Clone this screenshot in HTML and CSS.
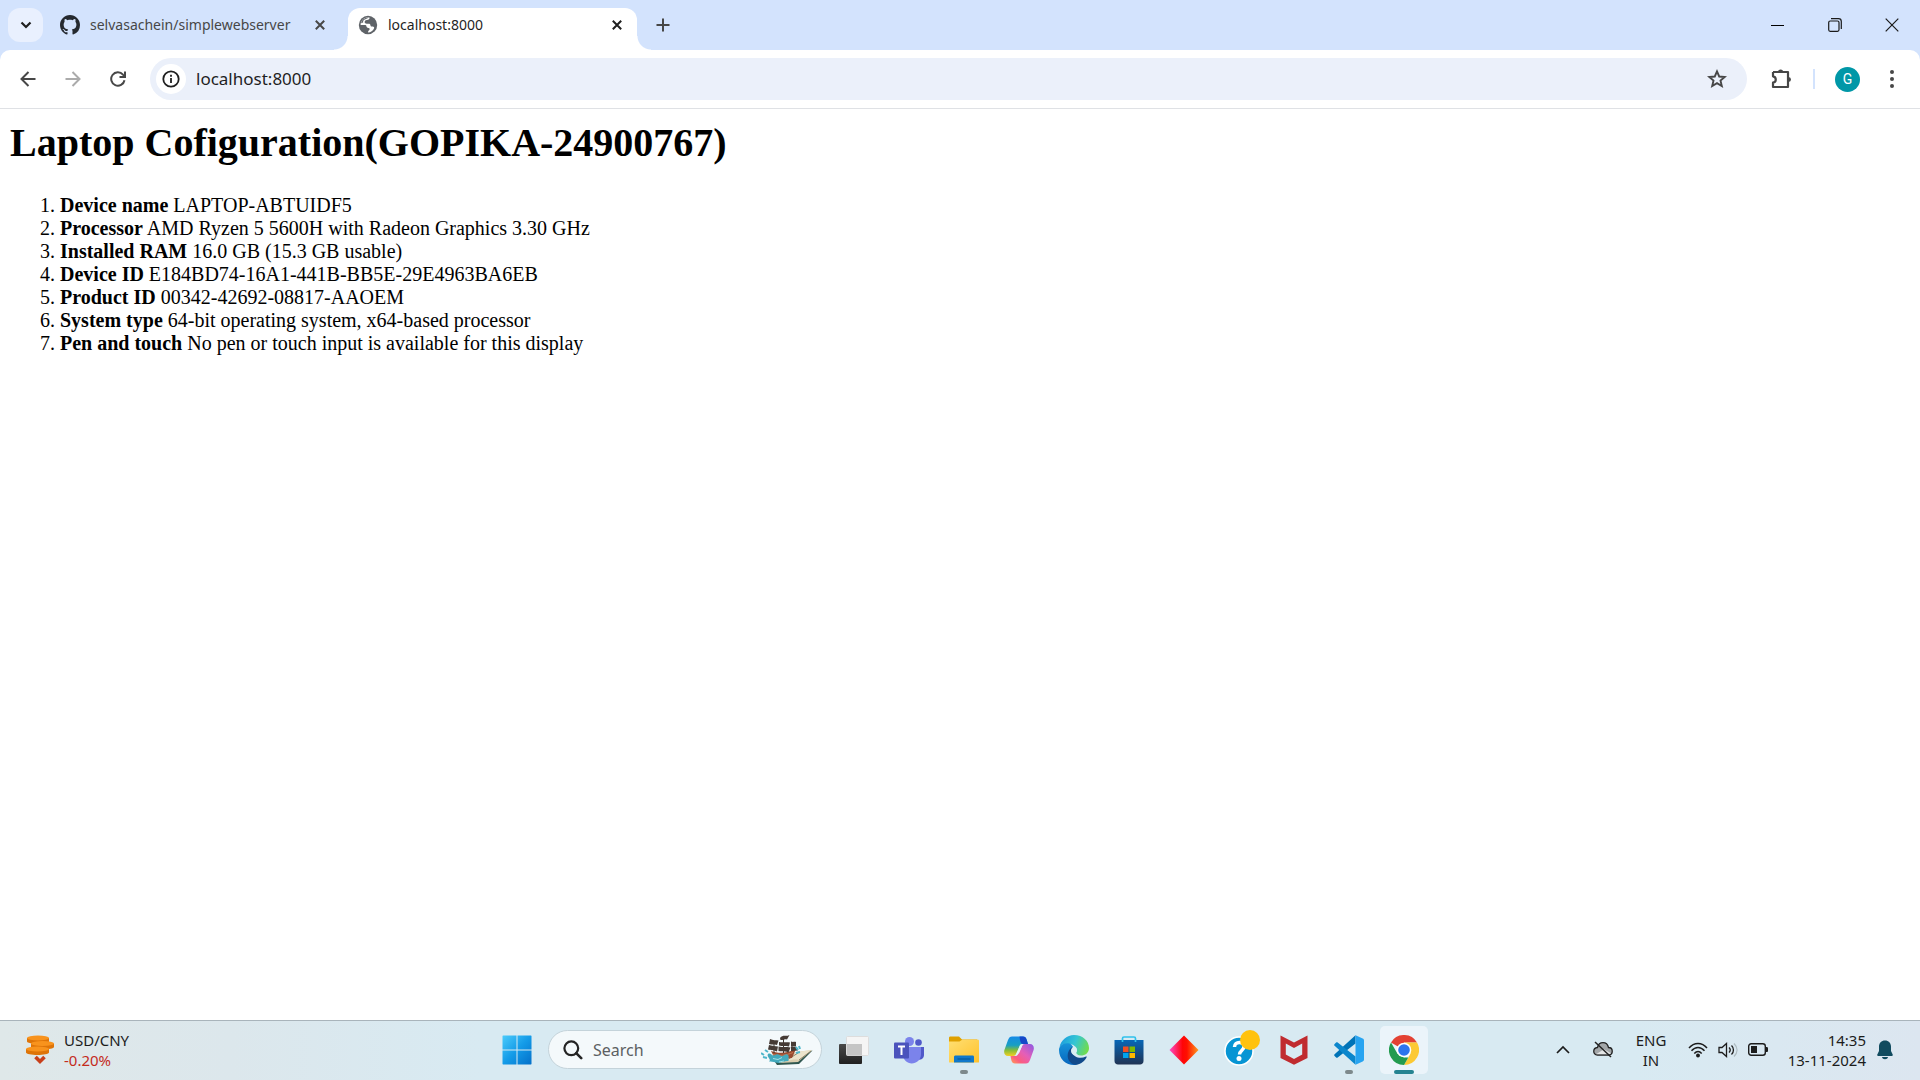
FILE: index.html
```html
<!DOCTYPE html>
<html lang="en">
<head>
<meta charset="utf-8">
<title>localhost:8000</title>
<link rel="stylesheet" href="styles.css">
</head>
<body>
<div class="screen">
  <header class="tabstrip">
    <button class="tab-search" aria-label="Search tabs">
      <svg width="12" height="8" viewBox="0 0 12 8"><path d="M1.500 1.500 6 6l4.500-4.500" fill="none" stroke="#1f1f1f" stroke-width="2.200"/></svg>
    </button>
    <div class="tab">
      <svg width="20" height="20" viewBox="0 0 16 16"><path fill="#24292f" d="M8 0C3.580 0 0 3.580 0 8c0 3.540 2.290 6.530 5.470 7.590.4.070.55-.17.55-.38 0-.19-.01-.82-.01-1.490-2.010.37-2.530-.49-2.690-.94-.09-.23-.48-.94-.82-1.130-.28-.15-.68-.52-.01-.53.63-.01 1.080.58 1.230.82.72 1.210 1.870.87 2.330.66.07-.52.28-.87.51-1.070-1.780-.2-3.640-.89-3.640-3.950 0-.87.31-1.590.82-2.150-.08-.2-.36-1.020.08-2.120 0 0 .67-.21 2.200.82.64-.18 1.320-.27 2-.27s1.360.09 2 .27c1.530-1.040 2.200-.82 2.200-.82.44 1.100.16 1.920.08 2.120.51.56.82 1.270.82 2.150 0 3.070-1.870 3.750-3.650 3.950.29.25.54.73.54 1.480 0 1.070-.01 1.930-.01 2.200 0 .21.15.46.55.38A8.010 8.010 0 0 0 16 8c0-4.420-3.580-8-8-8Z"/></svg>
      <span class="tab-title">selvasachein/simplewebserver</span>
      <button class="tab-close" aria-label="Close tab"><svg width="10" height="10" viewBox="0 0 10 10"><path d="M.8.8l8.400 8.400M9.200.8.8 9.200" stroke="#474747" stroke-width="2"/></svg></button>
    </div>
    <div class="tab tab-active">
      <svg width="20" height="20" viewBox="0 0 20 20"><circle cx="10" cy="10" r="9.200" fill="#5f6368"/><path d="M11.500 2.600c.3 1.700-.8 2.300-2.600 2.500-1.800.2-2.300 1-2.200 2.200.1 1 .9 1.400 2 1.400h1.800c1.500 0 1.900.7 2 1.700.1.900.9 1.100 2.100 1.200 1.300.1 1.800.6 1.500 1.700-1 2.700-3.400 4.200-6 4.200-.2-1.300.5-1.900 1.200-2.600.8-.9.400-1.800-.8-2-1.600-.2-2-.8-2.100-1.700-.1-.8-.7-1.100-1.600-1.100H2.600c-.1-3.700 2.700-7.300 6.400-7.600Z" fill="#fff"/><path d="M3 8.200C3.800 4.800 6.600 2.800 10 2.600c-.3 1-1.200 1.300-2.500 1.600-2 .5-2.600 1.700-2.400 3.200Z" fill="#5f6368"/></svg>
      <span class="tab-title">localhost:8000</span>
      <button class="tab-close" aria-label="Close tab"><svg width="10" height="10" viewBox="0 0 10 10"><path d="M.8.8l8.400 8.400M9.200.8.8 9.200" stroke="#1f1f1f" stroke-width="2"/></svg></button>
    </div>
    <button class="new-tab" aria-label="New tab"><svg width="14" height="14" viewBox="0 0 14 14"><path d="M7 .5v13M.5 7h13" stroke="#474747" stroke-width="2"/></svg></button>
    <div class="window-controls">
      <button aria-label="Minimize"><svg width="13" height="13" viewBox="0 0 13 13"><path d="M0 6.500h13" stroke="#000"/></svg></button>
      <button aria-label="Restore"><svg width="14" height="14" viewBox="0 0 14 14" fill="none" stroke="#1a1a1a" stroke-width="1.200"><rect x=".7" y="3" width="10.300" height="10.300" rx="1.500"/><path d="M3 .7h7.500a2.800 2.800 0 0 1 2.800 2.800V11"/></svg></button>
      <button aria-label="Close"><svg width="14" height="14" viewBox="0 0 14 14"><path d="M.7.7l12.600 12.600M13.300.7.7 13.300" stroke="#1a1a1a" stroke-width="1.200"/></svg></button>
    </div>
  </header>

  <div class="toolbar-back">
  <nav class="toolbar" aria-label="Browser">
    <button class="nav-button" aria-label="Back"><svg width="16" height="16" viewBox="0 0 16 16" fill="none" stroke="#474747" stroke-width="2"><path d="M15.500 8H2M8.500 1 1.500 8l7 7"/></svg></button>
    <button class="nav-button" aria-label="Forward"><svg width="16" height="16" viewBox="0 0 16 16" fill="none" stroke="#ababab" stroke-width="2"><path d="M.5 8H14M7.500 1l7 7-7 7"/></svg></button>
    <button class="nav-button" aria-label="Reload"><svg width="16" height="16" viewBox="0 0 16 16" fill="none" stroke="#474747" stroke-width="2"><path d="M14.500 9.200A6.700 6.700 0 1 1 13 3.600l1.500 1.600M15 .5V6H9.500"/></svg></button>
    <div class="omnibox">
      <button class="site-info" aria-label="Site information"><svg width="18" height="18" viewBox="0 0 18 18"><circle cx="9" cy="9" r="7.700" fill="none" stroke="#1f1f1f" stroke-width="1.800"/><path d="M9 8v5M9 4.800v1.900" stroke="#1f1f1f" stroke-width="1.800"/></svg></button>
      <input class="address" type="text" aria-label="Address" value="localhost:8000">
      <button class="bookmark" aria-label="Bookmark"><svg width="20" height="20" viewBox="0 0 20 20"><path d="m10 2.400 2.200 5.100 5.500.5-4.200 3.600 1.300 5.400-4.800-2.900L5.200 17l1.300-5.400L2.300 8l5.500-.5Z" fill="none" stroke="#474747" stroke-width="1.900"/></svg></button>
    </div>
    <button class="extensions" aria-label="Extensions"><svg width="22" height="22" viewBox="0 0 22 22"><path d="M3 4h15v5.200M3 4v4.300c3.700.6 3.700 5.800 0 6.400V19h15v-5.200M18 8v7" fill="none" stroke="#474747" stroke-width="2.200" stroke-linejoin="round"/><path d="M8 4a2.600 2.600 0 0 1 5.200 0ZM18.500 9a2.500 2.500 0 0 1 0 5Z" fill="#474747"/></svg></button>
    <span class="divider"></span>
    <button class="avatar" aria-label="Profile">G</button>
    <button class="menu" aria-label="Menu"><svg width="4" height="18" viewBox="0 0 4 18" fill="#474747"><circle cx="2" cy="2" r="2"/><circle cx="2" cy="9" r="2"/><circle cx="2" cy="16" r="2"/></svg></button>
  </nav>
  </div>

  <main class="page">
    <h1>Laptop Cofiguration(GOPIKA-24900767)</h1>
    <ol>
      <li><b>Device name</b> LAPTOP-ABTUIDF5</li>
      <li><b>Processor</b> AMD Ryzen 5 5600H with Radeon Graphics 3.30 GHz</li>
      <li><b>Installed RAM</b> 16.0 GB (15.3 GB usable)</li>
      <li><b>Device ID</b> E184BD74-16A1-441B-BB5E-29E4963BA6EB</li>
      <li><b>Product ID</b> 00342-42692-08817-AAOEM</li>
      <li><b>System type</b> 64-bit operating system, x64-based processor</li>
      <li><b>Pen and touch</b> No pen or touch input is available for this display</li>
    </ol>
  </main>

  <footer class="taskbar">
    <button class="widget">
      <svg width="28" height="30" viewBox="0 0 28 30"><g fill="#de7408"><path d="M0 14v3.500c0 3.300 23 3.300 23 0V14ZM5 8.500V12c0 3.300 23 3.300 23 0V8.500ZM1 3v3.500c0 3 22 3 22 0V3Z"/></g><g fill="#f8931d"><ellipse cx="11.500" cy="14" rx="11.500" ry="2.500"/><ellipse cx="16.500" cy="8.500" rx="11.500" ry="2.500"/><ellipse cx="12" cy="3" rx="11" ry="2.500"/></g><path d="m9.500 22 4.500 4.500 4.500-4.500" fill="none" stroke="#c8401b" stroke-width="3.600"/></svg>
      <span class="widget-text"><span>USD/CNY</span><span class="down">-0.20%</span></span>
    </button>

    <div class="apps">
      <button class="app" aria-label="Start"><svg width="30" height="30" viewBox="0 0 30 30"><defs><linearGradient id="win" x1="0" y1="0" x2="1" y2="1"><stop offset="0" stop-color="#4bcbfb"/><stop offset=".5" stop-color="#149be8"/><stop offset="1" stop-color="#0470c9"/></linearGradient></defs><path fill="url(#win)" d="M1 .5h13.500V14.500H.5V1ZM15.500.5H29l.5.5v13.500h-14ZM.5 15.500h14v14H1l-.5-.5ZM15.500 15.500h14V29l-.5.500H15.500Z"/></svg></button>
      <label class="search">
        <svg width="20" height="20" viewBox="0 0 20 20" fill="none" stroke="#242424" stroke-width="2.200"><circle cx="8.300" cy="8.300" r="6.900"/><path d="m13.200 13.200 5 5" stroke-width="2.600" stroke-linecap="round"/></svg>
        <input type="text" placeholder="Search" aria-label="Search">
        <svg width="52" height="32" viewBox="0 0 52 32"><path d="M14 28 34 19l17.500-2.500L38 30l-22 1Z" fill="#2f5750"/><path d="m22 27 13-9 16-2-14 12-19 1Z" fill="#d9cdae"/><path d="m35 18 16-2-13 10c-4-1-8 0-12 1Z" fill="#ece4cc"/><path d="m26 26 11-7M38 26l12-9" stroke="#8d8266" fill="none"/><path d="M10 17c8 3 17 2 25-2l-4 9-17 1Z" fill="#9a4c30"/><path d="M12 20.500c6 1.500 13 1 20-2" stroke="#c77a55" fill="none"/><path d="M13 8v11M22.500 2v17M31 9v8" stroke="#3f332d"/><path d="M9 5c3 1.500 6 1 8.500 1.500L16 11c-3-1-5 0-8-1ZM8 11c3 1 6 1 9 1.500l-1 5c-4-2-6-1-9-2ZM18 8c4 1 7-.5 11 .5l-1 4c-4-1-7 0-10-1ZM17.500 12.500c4 1 8 0 12 1l-2 5c-4-2-7-1-10-1.500ZM30 7.500c2 1 3 0 5 .5v4l-5 .5ZM30 13l5-.5c1 2 1 3 2 4l-7 .5ZM19 4c3-4 6-1 9.500-3L26 5.500c-3-1-4 1-6.500.5Z" fill="#453a34"/><path d="M7 20c3-2 4 3 7 1s5 1 7 1 4-3 6-1-1 5 1 6c-5-.5-8 3-13 1.500-3-1-5-1-7-1 3-2-3-5-1-7.500Z" fill="#43a9bc"/><path d="m0 19 3 2m-1 2 4 1M4 16l3 2M35 13l2 3m1-4 1 3m-4 4 4-1" stroke="#4fb7cb" stroke-width="2"/><path d="m12 24.500 5 1 4-2m-3 4.500 5-1" stroke="#a6e0e5" fill="none"/></svg>
      </label>
      <button class="app" aria-label="Task view"><svg width="30" height="30" viewBox="0 0 30 30"><defs><linearGradient id="tv" x1="0" y1="0" x2="0" y2="1"><stop offset="0" stop-color="#4a4a4a"/><stop offset="1" stop-color="#202020"/></linearGradient></defs><rect y="9" width="23" height="20" rx="1" fill="url(#tv)"/><rect x="7.500" y="1.500" width="22" height="19" rx="1" fill="#f5f5f5" stroke="#ddd"/><path d="M8 9h15v11.500H8Z" fill="#c5c5c5"/></svg></button>
      <button class="app" aria-label="Teams"><svg width="30" height="28" viewBox="0 0 30 28"><circle cx="15.500" cy="5.500" r="4.500" fill="#7b83eb"/><circle cx="24.500" cy="6.500" r="3.300" fill="#5059c9"/><path d="M19 11h11v8c0 5-6 6-9 3Z" fill="#5059c9"/><path d="M8 11h19v7c0 12-18 13-18 0Z" fill="#7b83eb"/><rect y="6.500" width="15" height="16" rx="1" fill="#4b53bc"/><path d="M4 10.500h7M7.500 10.500V19" stroke="#fff" stroke-width="2"/></svg></button>
      <button class="app app-running" aria-label="File Explorer"><svg width="30" height="27" viewBox="0 0 30 27"><defs><linearGradient id="fe" x1="0" y1="0" x2="1" y2="1"><stop offset="0" stop-color="#ffdf73"/><stop offset="1" stop-color="#ffc22b"/></linearGradient></defs><path d="M0 2C0 1 .5.500 1.500.500H10l3 3h15v7H0Z" fill="#dfa000"/><path d="M0 5.500h10.500l3-2H28.500c1 0 1.500.5 1.500 1.500v21c0 .5-.3.500-1 .500H1c-.7 0-1 0-1-.5Z" fill="url(#fe)"/><path d="M5 26.500V21c0-1 .7-1.500 1.500-1.500h17c1 0 1.500.6 1.500 1.500v5.500Z" fill="#1178ca"/><path d="M8.500 23h13" stroke="#075390"/></svg></button>
      <button class="app" aria-label="Copilot"><svg width="30" height="28" viewBox="0 0 30 28"><defs><linearGradient id="cp1" x1="0" y1="0" x2="0" y2="1"><stop offset="0" stop-color="#168be7"/><stop offset=".45" stop-color="#199fc3"/><stop offset=".7" stop-color="#83bd3b"/><stop offset="1" stop-color="#f2cf22"/></linearGradient><linearGradient id="cp2" x1="1" y1="0" x2="0" y2="1"><stop offset="0" stop-color="#8b59e4"/><stop offset=".45" stop-color="#e45fb8"/><stop offset=".75" stop-color="#fb5c7f"/><stop offset="1" stop-color="#ffa553"/></linearGradient></defs><path d="M8 .5h11c2 0 3 1 3.600 3L24 8h-5c-2.200 0-3 1-3.600 3l-3 6c-.7 2-1.500 3-3.400 3H4c-3 0-4.500-3-3.600-6L4 4C5 1.500 6 .5 8 .5Z" fill="url(#cp1)"/><path d="M15.500.5H19c2 0 3 1 3.600 3L24 8h-5c-2 0-2.500-2-3-4Z" fill="#1647c8"/><path d="M22 27.500H11c-2 0-3-1-3.600-3L6.500 20H11c2.200 0 3-1 3.600-3l3-6c.7-2 1.500-3 3.400-3h5c3 0 4.500 3 3.600 6L26 24c-1 2.500-2 3.500-4 3.500Z" fill="url(#cp2)"/><path d="m16 9-4 10c2-1 3-1 4-4l3-7c-1.500 0-2 0-3 1Z" fill="#e5f3f6"/></svg></button>
      <button class="app" aria-label="Edge"><svg width="30" height="30" viewBox="0 0 30 30"><defs><linearGradient id="ed1" x1="0" y1=".3" x2="1" y2=".6"><stop offset="0" stop-color="#1b9ddf"/><stop offset=".5" stop-color="#35c6d3"/><stop offset="1" stop-color="#72dc4a"/></linearGradient><linearGradient id="ed2" x1="0" y1="0" x2="0" y2="1"><stop offset="0" stop-color="#1693d9"/><stop offset="1" stop-color="#0866bd"/></linearGradient></defs><path d="M.5 12C2 5 8 0 15 0c9 0 15 6 15 13 0 5-4 7.500-8 7.500-3 0-5-1-5-2.500 0-1 1-1 1-3 0-3-4-6-8-6S3 9 .5 12Z" fill="url(#ed1)"/><path d="M10.500 8.500C4 7.500 0 11 0 15c0 9 7 15 15 15 1 0 2 0 3-.3C9 26 8 16 14 12c-1-2-2-3-3.500-3.500Z" fill="url(#ed2)"/><path d="M14 11.500c-9 5-6 19 4 18.200 4-.7 8-3.700 9.700-7.700.2-.6-.3-.7-.7-.5-6 3-12.500.5-14-4-.6-2-.3-4 1-6Z" fill="#114a8b"/><path d="M14.500 12c3-.5 4 3 3 5-.7 1 0 2 1.500 3-4 1-7-1-7-4 0-2 1-3.500 2.500-4Z" fill="#d9edf3"/></svg></button>
      <button class="app" aria-label="Microsoft Store"><svg width="30" height="30" viewBox="0 0 30 30"><defs><linearGradient id="ms" x1="0" y1="0" x2="0" y2="1"><stop offset="0" stop-color="#0867b7"/><stop offset="1" stop-color="#203354"/></linearGradient></defs><path d="M.5 5h29v21c0 2-1.500 3.500-3.500 3.500H4C2 29.500.5 28 .5 26Z" fill="url(#ms)"/><path d="M8.500 7V3.500c0-1 .6-1.500 1.500-1.500h10c1 0 1.500.6 1.500 1.500V7" fill="none" stroke="#2fc1ec" stroke-width="1.700"/><path fill="#f25022" d="M9 11.500h5.500V17H9z"/><path fill="#7fba00" d="M15.500 11.500H21V17h-5.500z"/><path fill="#00a4ef" d="M9 18h5.500v5H9z"/><path fill="#ffb900" d="M15.500 18H21v5h-5.500z"/></svg></button>
      <button class="app" aria-label="Diamond"><svg width="30" height="30" viewBox="0 0 30 30"><defs><linearGradient id="dm"><stop offset="0" stop-color="#ff4ac6"/><stop offset=".45" stop-color="#ff0508"/><stop offset=".6" stop-color="#ff1000"/><stop offset="1" stop-color="#ff9a20"/></linearGradient></defs><path d="m15 .5 14.500 14.500L15 29.500.5 15Z" fill="url(#dm)"/></svg></button>
      <button class="app" aria-label="Help"><svg class="help-icon" width="36" height="36" viewBox="0 0 36 36"><circle cx="15" cy="21" r="14" fill="#0795d4" stroke="#fff" stroke-width="1.500"/><path d="M10.500 17c0-6 9.500-6 9.500-.5 0 4-4.500 4-4.500 8" fill="none" stroke="#fff" stroke-width="3.500"/><circle cx="15" cy="28.500" r="2.500" fill="#fff"/><circle cx="26" cy="10" r="10" fill="#ffc20e"/></svg></button>
      <button class="app" aria-label="McAfee"><svg width="28" height="30" viewBox="0 0 28 30"><path d="m.5.500 13.500 7 13.500-7V23L14 29.800.5 23Zm5.300 8V19.500L14 24l8.200-4.500V8.500L14 13Z" fill="#c02b2f" fill-rule="evenodd"/></svg></button>
      <button class="app app-running" aria-label="Visual Studio Code"><svg width="30" height="30" viewBox="0 0 30 30"><path d="M21.500 8.500 3.700 22.500c-.6.4-1.100.4-1.600 0L.6 21.100c-.6-.6-.6-1.300 0-1.800L21.500.3Z" fill="#0073b7"/><path d="M21.500 21.500 3.700 7.500c-.6-.4-1.100-.4-1.600 0L.6 8.900c-.6.6-.6 1.300 0 1.800l20.900 19Z" fill="#0b86cc"/><path d="m21.500.3 7.200 3.300c.8.4 1.300 1 1.300 1.900v19c0 .9-.5 1.500-1.300 1.900l-7.200 3.300Z" fill="#27a4f1"/></svg></button>
      <button class="app app-current" aria-label="Chrome"><svg width="30" height="30" viewBox="0 0 30 30"><path d="M15 15 2 7.500A15 15 0 0 1 28 7.500H15Z" fill="#e34133"/><path d="M15 7.500h13A15 15 0 0 1 15 30l6.500-11.200Z" fill="#fcc934"/><path d="m2 7.500 6.500 11.300L15 22.500h4.300L15 30A15 15 0 0 1 2 7.500Z" fill="#239b4f"/><circle cx="15" cy="15" r="7.300" fill="#fff"/><circle cx="15" cy="15" r="5.800" fill="#2d75ee"/></svg></button>
    </div>

    <div class="tray">
      <button class="chevron" aria-label="Hidden icons"><svg width="14" height="9" viewBox="0 0 14 9"><path d="m1 8 6-6 6 6" fill="none" stroke="#1c1c1c" stroke-width="1.700"/></svg></button>
      <button class="cloud" aria-label="OneDrive"><svg width="20" height="17" viewBox="0 0 20 17"><path d="M4.500 14C-.5 13.500-.5 7 4.500 6.500 6 0 14 0 15.500 6.500c5 0 5 7.500 0 7.500Z" fill="#a3a7a9" stroke="#222" stroke-width="1.300"/><path d="m3 13.300 8-5 7 4-2 1Z" fill="#e4e6e6"/><path d="m2 1 16 15" stroke="#222" stroke-width="1.500"/></svg></button>
      <button class="language"><span>ENG</span><span>IN</span></button>
      <button class="system" aria-label="Network, volume and battery">
        <svg width="20" height="16" viewBox="0 0 20 16" fill="none" stroke="#1c1c1c" stroke-width="1.500"><path d="M1 6c5-6 13-6 18 0M3.500 8.800c4-4.500 9-4.500 13 0M6.300 11.600c2.500-2.700 5-2.700 7.400 0"/><circle cx="10" cy="13.500" r="1.200" fill="#1c1c1c"/></svg>
        <svg width="20" height="16" viewBox="0 0 20 16" fill="none" stroke="#1c1c1c" stroke-width="1.300"><path d="M1 5.500h3L8.500 1.500v13L4 10.500H1ZM11 5.500c1.500 1.500 1.500 3.500 0 5M13.500 3.500c2.600 2.500 2.600 6.500 0 9"/><path d="M16 1.500c4 4 4 9 0 13" stroke="#aebbc0"/></svg>
        <svg width="20" height="13" viewBox="0 0 20 13"><rect x=".7" y=".7" width="16.600" height="11.600" rx="2.500" fill="none" stroke="#1c1c1c" stroke-width="1.400"/><rect x="3" y="3" width="6" height="7" fill="#1c1c1c"/><path d="M17.500 4h1.200c.8 0 1.300.6 1.300 1.300v2.400c0 .7-.5 1.300-1.300 1.300h-1.200Z" fill="#1c1c1c"/></svg>
      </button>
      <button class="clock"><span>14:35</span><span>13-11-2024</span></button>
      <button class="bell" aria-label="Notifications"><svg width="16" height="20" viewBox="0 0 16 20" fill="#114b5f"><path d="M8 .5c-3.600 0-6 2.600-6 6V11L.3 14.500c-.3.700 0 1.500.9 1.500h13.600c.9 0 1.200-.8.9-1.500L14 11V6.500c0-3.400-2.400-6-6-6ZM5 17h6c-.4 3-5.600 3-6 0Z"/></svg></button>
    </div>
  </footer>
</div>
</body>
</html>
```
FILE: styles.css
```css
* { box-sizing: border-box; }

body {
  margin: 0;
  background: #fff;
  font-family: "Noto Sans", "Open Sans", sans-serif;
}

button, input {
  margin: 0;
  padding: 0;
  border: 0;
  background: none;
  color: inherit;
  font: inherit;
}

button {
  display: flex;
  flex: none;
  align-items: center;
  justify-content: center;
}

svg { display: block; flex: none; }

.screen {
  display: flex;
  flex-direction: column;
  min-height: 100vh;
}

/* Tab strip */
.tabstrip {
  display: flex;
  align-items: flex-end;
  height: 50px;
  padding-left: 8px;
  background: #d3e3fd;
}

.tab-search {
  width: 35px;
  height: 34px;
  margin-bottom: 8px;
  border-radius: 12px;
  background: #e9f0fe;
}

.tab {
  display: flex;
  align-items: center;
  width: 289px;
  height: 42px;
  padding: 0 10px 8px;
  color: #474747;
  font-size: 14px;
  line-height: 20px;
}

.tab:not(.tab-active) { margin-left: 7px; width: 298px; padding-right: 18px; }

.tab-title {
  flex: 1;
  margin-left: 10px;
  white-space: nowrap;
}

.tab-close { width: 20px; height: 20px; }

.tab-active {
  position: relative;
  border-radius: 12px 12px 0 0;
  background: #fff;
  color: #1f1f1f;
}

/* Flared feet of the active tab */
.tab-active::before, .tab-active::after {
  content: "";
  position: absolute;
  bottom: 0;
  width: 14px;
  height: 14px;
}

.tab-active::before {
  left: -14px;
  background: radial-gradient(circle at 0 0, transparent 13px, #fff 14px);
}

.tab-active::after {
  right: -14px;
  background: radial-gradient(circle at 100% 0, transparent 13px, #fff 14px);
}

.new-tab { width: 34px; height: 34px; margin: 0 0 8px 9px; }

.window-controls {
  display: flex;
  align-self: stretch;
  margin-left: auto;
}

.window-controls button { width: 57px; }

/* Toolbar */
.toolbar-back { background: #d3e3fd; }

.toolbar {
  display: flex;
  align-items: center;
  height: 59px;
  padding-left: 5px;
  border-bottom: 1px solid #dfe1e5;
  border-radius: 10px 10px 0 0;
  background: #fff;
}

.nav-button { width: 45px; height: 40px; }

.omnibox {
  display: flex;
  flex: 1;
  align-items: center;
  height: 42px;
  margin-left: 10px;
  padding: 0 20px 0 6px;
  border-radius: 21px;
  background: #ebf0fa;
}

.site-info {
  width: 30px;
  height: 30px;
  border-radius: 15px;
  background: #fff;
}

.address {
  flex: 1;
  min-width: 0;
  margin-left: 10px;
  color: #1f1f1f;
  font-size: 17px;
  line-height: 24px;
}

.extensions { width: 24px; margin-left: 22px; }

.divider {
  width: 2px;
  height: 20px;
  margin-left: 20px;
  background: #d3e3fd;
}

.avatar {
  width: 25px;
  height: 25px;
  margin-left: 20px;
  border-radius: 50%;
  background: #0097a7;
  color: #fff;
  font: 14px/25px Roboto, sans-serif;
}

.menu { width: 20px; height: 30px; margin: 0 18px 0 22px; }

/* Document */
.page {
  flex: 1;
  padding: 11px 10px 10px;
  color: #000;
  font: 20px/23px "Liberation Serif", serif;
}

.page h1 { margin: 0 0 28px; font-size: 40px; line-height: 46px; }

.page ol { margin: 0; padding-left: 50px; }

/* Taskbar */
.taskbar {
  display: grid;
  grid-template-columns: 1fr auto 1fr;
  height: 60px;
  padding-bottom: 2px;
  border-top: 1px solid #a9b4bb;
  background: linear-gradient(90deg, #dfe8e9 0, #dce7ec 12%, #d8eaf2 25%, #d8eaf2 85%, #dce6f0 100%);
  color: #1c1c1c;
  font-size: 15px;
  line-height: 20px;
}

.widget { justify-self: start; padding-left: 26px; gap: 10px; }

.widget-text { display: flex; flex-direction: column; align-items: flex-start; }

.down { color: #c42b1c; }

.apps { display: flex; align-items: center; }

.app { position: relative; width: 55px; height: 48px; }

.app-running::after, .app-current::after {
  content: "";
  position: absolute;
  bottom: 0;
  left: 50%;
  width: 8px;
  height: 4px;
  margin-left: -4px;
  border-radius: 2px;
  background: #7d898c;
}

.app-current {
  width: 48px;
  margin: 0 3px 0 4px;
  border-radius: 5px;
  background: #ebf4fa;
}

.app-current::after {
  width: 20px;
  margin-left: -10px;
  background: #258391;
}

.help-icon { margin: 0 0 4px 6px; }

.search {
  display: flex;
  align-items: center;
  width: 274px;
  height: 39px;
  margin: 0 4px;
  padding: 0 8px 0 14px;
  border: 1px solid #c4d3da;
  border-radius: 20px;
  background: #f4f9fb;
}

.search input {
  flex: 1;
  min-width: 0;
  margin-left: 10px;
  font-size: 16px;
  line-height: 22px;
}

.search input::placeholder { color: #5c6062; opacity: 1; }

.tray { display: flex; align-items: stretch; justify-self: end; padding-right: 25px; }

.chevron, .cloud { width: 40px; }

.language, .clock { flex-direction: column; }

.language { width: 56px; }

.system { gap: 10px; padding: 0 9px; }

.clock { align-items: flex-end; width: 89px; }

.bell { width: 20px; margin-left: 9px; }
```
